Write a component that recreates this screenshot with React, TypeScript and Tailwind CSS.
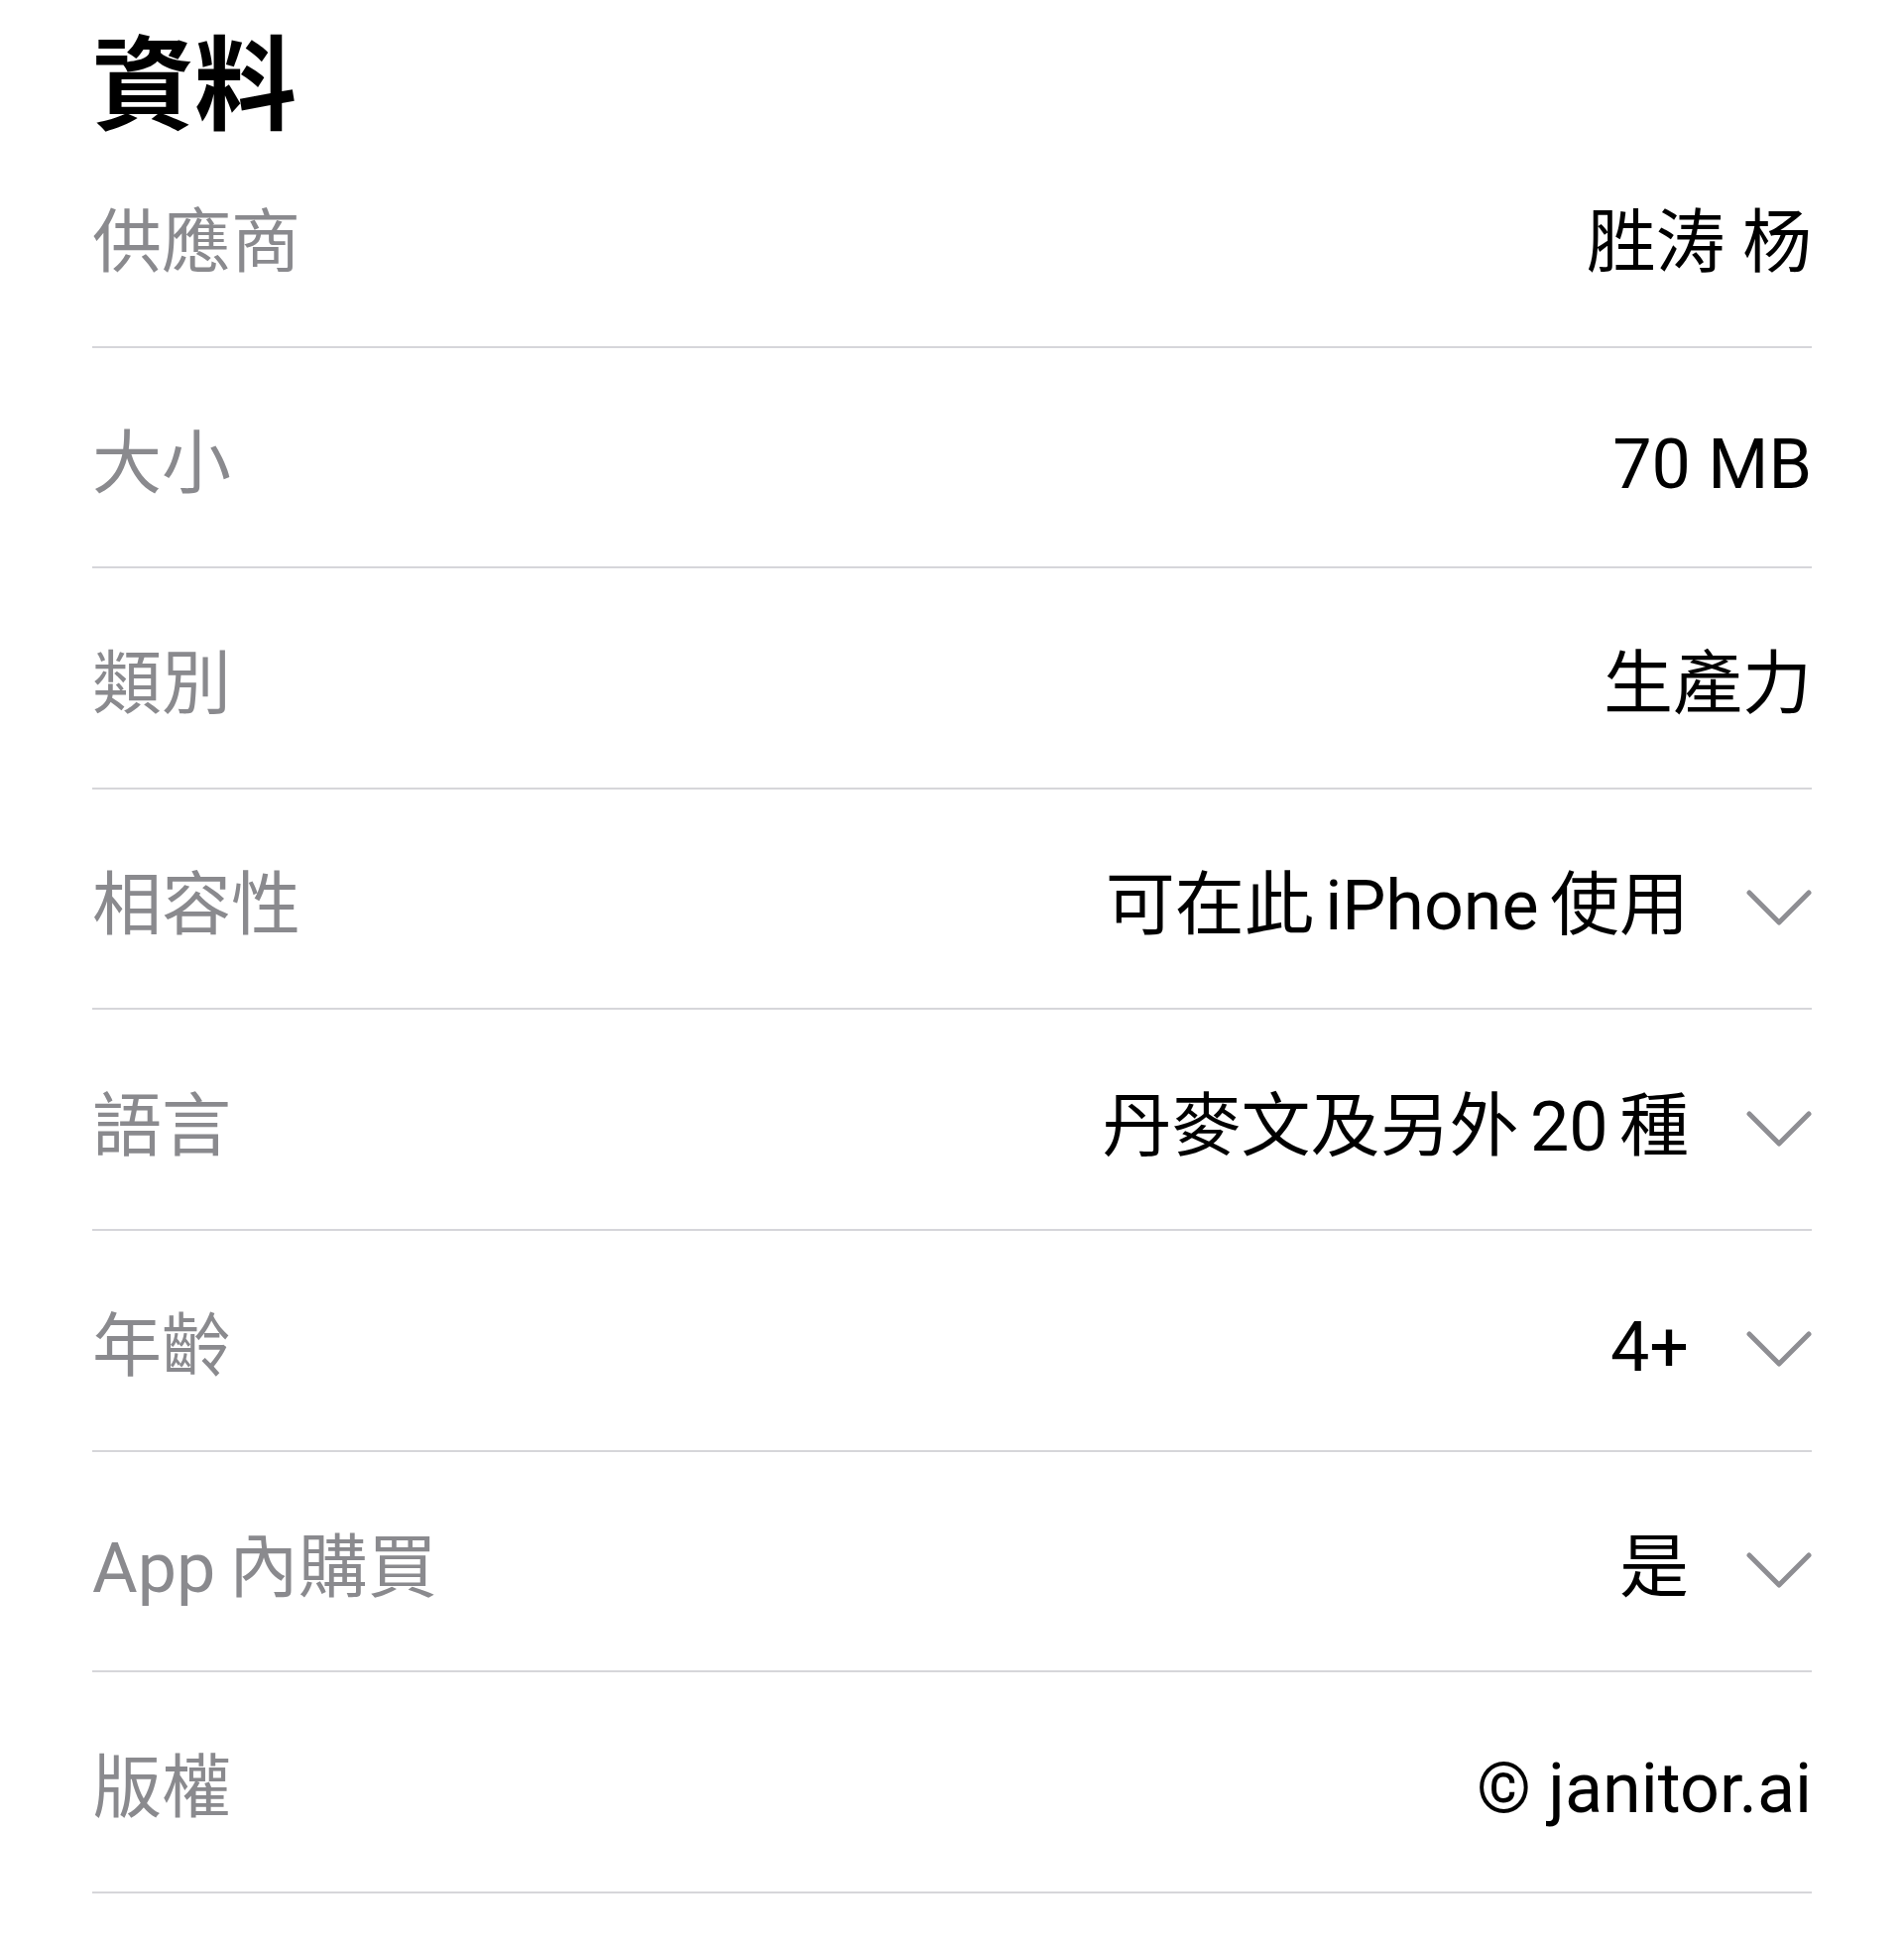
const rows: { label: string; value: string; more?: boolean }[] = [
  { label: '供應商', value: '胜涛 杨' },
  { label: '大小', value: '70 MB' },
  { label: '類別', value: '生產力' },
  { label: '相容性', value: '可在此 iPhone 使用', more: true },
  { label: '語言', value: '丹麥文及另外 20 種', more: true },
  { label: '年齡', value: '4+', more: true },
  { label: 'App 內購買', value: '是', more: true },
  { label: '版權', value: '© janitor.ai' },
]

function Chevron() {
  return (
    <svg width="66" height="38" viewBox="0 0 66 38" fill="none" className="mt-[6px] shrink-0">
      <polyline
        points="3,3 33,33 63,3"
        stroke="#8e8e93"
        strokeWidth="5"
        strokeLinecap="round"
        strokeLinejoin="round"
      />
    </svg>
  )
}

export default function App() {
  return (
    <div
      className="min-h-[1967px] w-[1920px] bg-white"
      style={{ fontFamily: 'Roboto, "Noto Sans CJK TC", sans-serif' }}
    >
      <div className="mx-[93px]">
        <div className="h-[128px] pt-[36px] text-[103px] font-bold leading-none text-black">資料</div>
        {rows.map((r) => (
          <div
            key={r.label}
            className="flex h-[222.6px] items-center justify-between border-b-2 border-[#d6d6da] pt-[14px]"
          >
            <span className="text-[70px] leading-none text-[#8a8a8e] [word-spacing:-4px]">{r.label}</span>
            <div className="flex items-center gap-[58px]">
              <span className={r.more ? 'text-[70px] leading-none text-black [word-spacing:-6px]' : 'text-[70px] leading-none text-black'}>
                {r.value}
              </span>
              {r.more && <Chevron />}
            </div>
          </div>
        ))}
      </div>
    </div>
  )
}
